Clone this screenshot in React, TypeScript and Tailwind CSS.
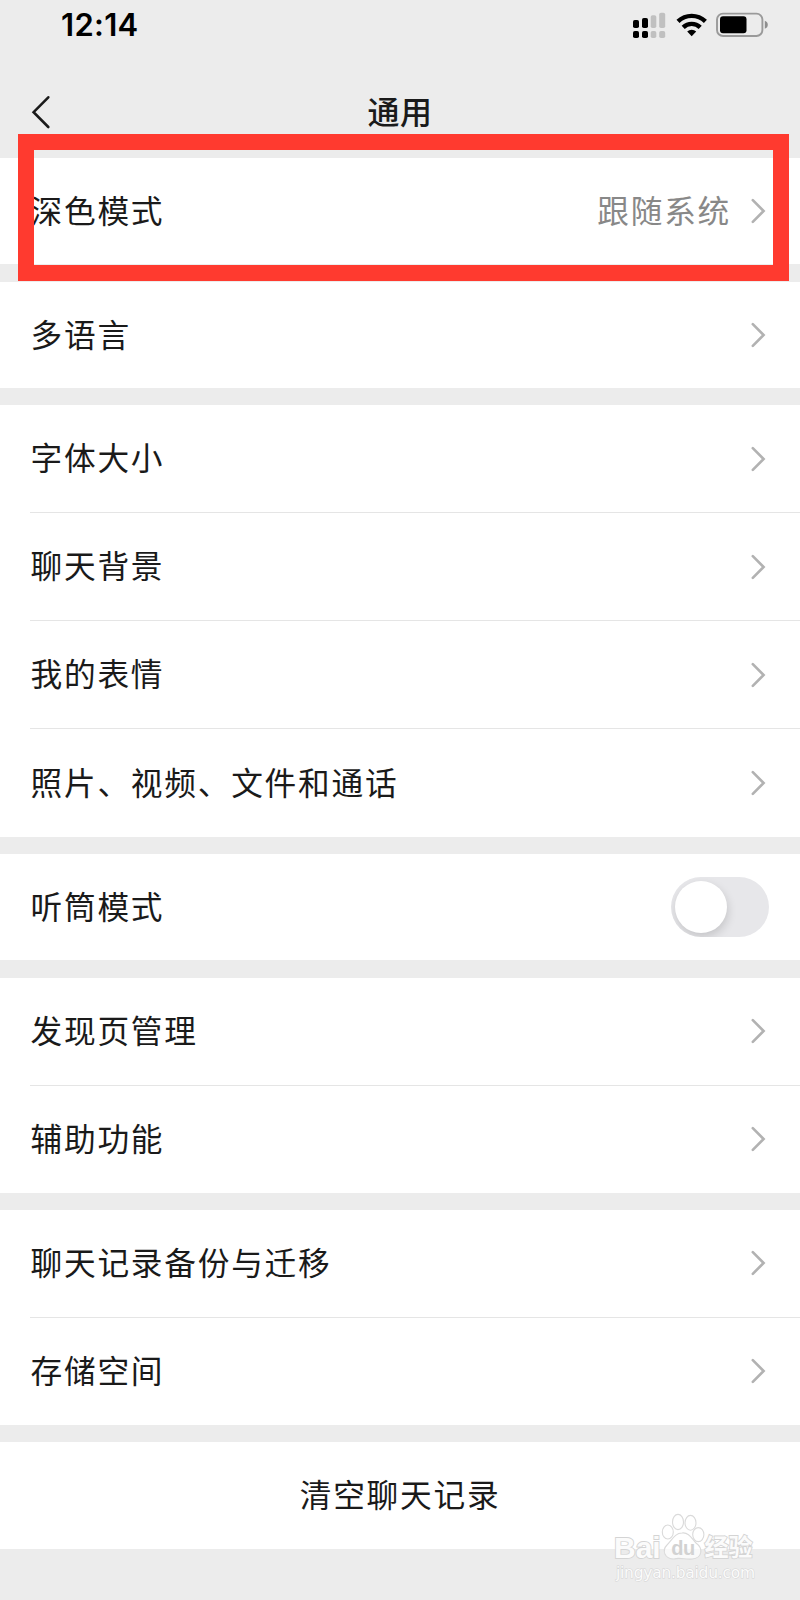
import clsx from 'clsx';

interface SettingItem {
  label: string;
  value?: string;
  toggle?: boolean;
}

interface SettingGroup {
  height: string;
  items: SettingItem[];
}

const groups: SettingGroup[] = [
  { height: 'h-[106px] mb-[18px]', items: [{ label: '深色模式', value: '跟随系统' }] },
  { height: 'h-[106px] mb-[17px]', items: [{ label: '多语言' }] },
  {
    height: 'h-[432px] mb-[17px]',
    items: [
      { label: '字体大小' },
      { label: '聊天背景' },
      { label: '我的表情' },
      { label: '照片、视频、文件和通话' },
    ],
  },
  { height: 'h-[106px] mb-[18px]', items: [{ label: '听筒模式', toggle: true }] },
  { height: 'h-[215px] mb-[17px]', items: [{ label: '发现页管理' }, { label: '辅助功能' }] },
  { height: 'h-[215px] mb-[17px]', items: [{ label: '聊天记录备份与迁移' }, { label: '存储空间' }] },
];

function StatusIcons() {
  return (
    <svg className="absolute right-[31px] top-3" width="136" height="27" viewBox="633 12 136 27">
      {/* dual SIM signal */}
      <g fill="#000">
        <rect x="633" y="20" width="6" height="8" rx="1.8" />
        <rect x="642" y="18" width="6" height="10" rx="1.8" />
        <rect x="633" y="31" width="6" height="7" rx="1.8" />
        <rect x="642" y="31" width="6" height="7" rx="1.8" />
      </g>
      <g fill="#c0c0c0">
        <rect x="650.7" y="15.3" width="5.6" height="12.7" rx="1.8" />
        <rect x="659.2" y="12.7" width="6" height="15.3" rx="1.8" />
        <rect x="650.7" y="31" width="5.6" height="7" rx="1.8" />
        <rect x="659.2" y="31" width="6" height="7" rx="1.8" />
      </g>
      {/* wifi */}
      <g fill="none" stroke="#000">
        <path d="M678 21.3A20 20 0 0 1 705.4 21.3" strokeWidth="4.4" />
        <path d="M683.2 27.3A12.2 12.2 0 0 1 700.2 27.3" strokeWidth="4.4" />
      </g>
      <path d="M687.2 31.6A6.4 6.4 0 0 1 696.2 31.6L691.7 36.2Z" fill="#000" />
      {/* battery */}
      <rect x="717" y="13.6" width="45.4" height="22.4" rx="6" fill="none" stroke="#9a9a9a" strokeWidth="1.9" />
      <rect x="720" y="16.2" width="26.5" height="17" rx="3" fill="#000" />
      <path d="M764.8 20.8C768.8 22 768.8 27.6 764.8 28.8Z" fill="#8e8e8e" />
    </svg>
  );
}

function Chevron() {
  return (
    <svg className="mr-[34px] shrink-0" width="16" height="26" viewBox="0 0 16 26" fill="none">
      <path d="M2.8 2.2L13.6 13L2.8 23.8" stroke="#b2b2b2" strokeWidth="2.6" strokeLinecap="round" />
    </svg>
  );
}

function Toggle() {
  return (
    <div className="mr-[31px] flex h-[60px] w-[98px] items-center overflow-hidden rounded-full bg-[#e7e7ea] px-1">
      <div className="size-[52px] rounded-full bg-white shadow-[1px_4px_10px_rgba(0,0,0,0.15)]" />
    </div>
  );
}

function Watermark() {
  return (
    <svg className="absolute left-[610px] top-[1510px]" width="150" height="74" viewBox="610 1510 150 74">
      <g fill="#fff" fillOpacity="0.7" stroke="#dadada" strokeWidth="1.1">
        <ellipse cx="667.8" cy="1532" rx="5.5" ry="7" />
        <ellipse cx="678" cy="1522" rx="5.5" ry="7.6" />
        <ellipse cx="690.5" cy="1522.8" rx="5.5" ry="7.4" />
        <ellipse cx="698.3" cy="1534.6" rx="5.6" ry="7" />
        <path d="M682 1533C689 1532 692 1539 696 1543C703 1548 703 1558 692 1559C686 1560 680 1557 674 1559C664 1559 662 1550 667 1545C672 1540 675 1533 682 1533Z" />
      </g>
      <g fill="#fbfbfb" stroke="#d4d4d4" strokeWidth="1.8" paintOrder="stroke">
        <text x="614" y="1557.5" fontSize="30" fontWeight="700" letterSpacing="0" className="font-['Liberation_Sans',sans-serif]">
          Bai
        </text>
        <text x="704.5" y="1556" fontSize="24" fontWeight="700" letterSpacing="0" className="font-['Noto_Sans_CJK_SC',sans-serif]">
          经验
        </text>
        <text x="616" y="1577.5" fontSize="15.5" strokeWidth="1" letterSpacing="0" textLength="139" className="font-['DejaVu_Sans',sans-serif]">
          jingyan.baidu.com
        </text>
      </g>
      <text x="671.3" y="1555" fontSize="20" fontWeight="700" letterSpacing="-0.4" fill="#d2d2d2" className="font-['Liberation_Sans',sans-serif]">
        du
      </text>
    </svg>
  );
}

function Row({ item, last }: { item: SettingItem; last: boolean }) {
  return (
    <div className="flex flex-1 pl-[30px]">
      <div className={clsx('flex flex-1 items-center', !last && 'border-b border-[#e5e5e5]')}>
        <span className="ml-[0.5px] flex-1 pb-[3px]">{item.label}</span>
        {item.value && <span className="mr-[19px] pb-[3px] text-[#888]">{item.value}</span>}
        {item.toggle ? <Toggle /> : <Chevron />}
      </div>
    </div>
  );
}

export default function App() {
  return (
    <div className="relative h-[1600px] w-[800px] overflow-hidden bg-[#ececec] font-['Noto_Sans_CJK_SC',sans-serif] text-[31.7px] leading-none tracking-[1.75px] text-[#1a1a1a]">
      <header className="relative flex h-[158px] flex-col">
        <div className="pl-[61px] pt-[9px] font-['Inter',sans-serif] text-[31px] font-semibold leading-[32px] tracking-[0.3px] text-black">
          12:14
        </div>
        <StatusIcons />
        <div className="mt-[44px] flex h-[50px] items-center justify-center">
          <svg className="absolute left-[30px] top-[94px]" width="22" height="36" viewBox="0 0 22 36" fill="none">
            <path d="M18.3 3.3L3.6 18.2L18.3 33" stroke="#1a1a1a" strokeWidth="2.6" strokeLinecap="round" />
          </svg>
          <h1 className="text-[32px] font-medium tracking-[0.6px]">通用</h1>
        </div>
      </header>

      <main>
        {groups.map((group, i) => (
          <section key={i} className={clsx('flex flex-col bg-white', group.height)}>
            {group.items.map((item, j) => (
              <Row key={item.label} item={item} last={j === group.items.length - 1} />
            ))}
          </section>
        ))}
        <button className="flex h-[107px] w-full items-center justify-center bg-white pb-[3px] tracking-[1.75px]">
          清空聊天记录
        </button>
      </main>

      {/* highlight around the dark mode row */}
      <div className="absolute left-[18px] top-[134px] h-[147px] w-[771px] border-[16px] border-[#ff3a2f]" />
      <Watermark />
    </div>
  );
}
